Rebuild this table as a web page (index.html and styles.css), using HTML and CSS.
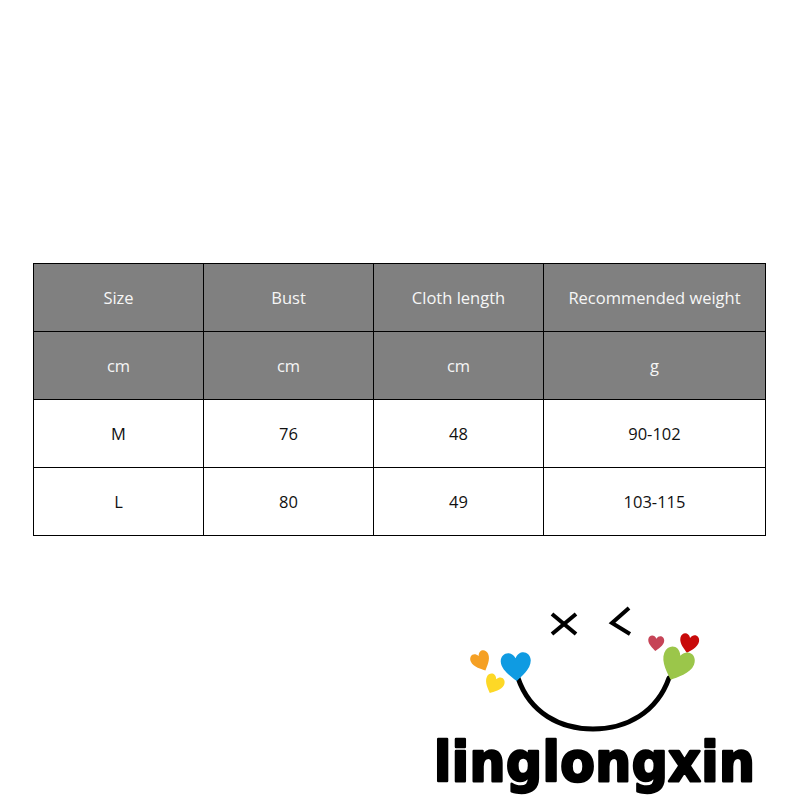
FILE: index.html
```html
<!DOCTYPE html>
<html>
<head>
<meta charset="utf-8">
<link rel="stylesheet" href="styles.css">
</head>
<body>
<div class="page">
  <div class="table">
    <div class="cell head">Size</div>
    <div class="cell head">Bust</div>
    <div class="cell head">Cloth length</div>
    <div class="cell head">Recommended weight</div>
    <div class="cell head">cm</div>
    <div class="cell head">cm</div>
    <div class="cell head">cm</div>
    <div class="cell head">g</div>
    <div class="cell">M</div>
    <div class="cell">76</div>
    <div class="cell">48</div>
    <div class="cell">90-102</div>
    <div class="cell">L</div>
    <div class="cell">80</div>
    <div class="cell">49</div>
    <div class="cell">103-115</div>
  </div>
  <svg class="logo" width="360" height="210" viewBox="420 590 360 210">
    <defs>
      <path id="heart" d="M0,0.5 C-0.15,0.36 -0.5,0.12 -0.5,-0.17 C-0.5,-0.46 -0.14,-0.56 0,-0.26 C0.14,-0.56 0.5,-0.46 0.5,-0.17 C0.5,0.12 0.15,0.36 0,0.5 Z"/>
    </defs>
    <g stroke="#000" stroke-width="4" fill="none" stroke-linecap="butt">
      <line x1="552" y1="614" x2="576" y2="634"/>
      <line x1="576" y1="614" x2="552" y2="634"/>
      <polyline points="629,608 612,623 630,634"/>
    </g>
    <path d="M518,678 C530,713 560,729 593,729 C627,729 657,712 669,678" stroke="#000" stroke-width="5" fill="none" stroke-linecap="round"/>
    <use href="#heart" fill="#f5a024" transform="translate(481,661) rotate(-25) scale(19,21)"/>
    <use href="#heart" fill="#fdd826" transform="translate(494,684) rotate(25) scale(19,20)"/>
    <use href="#heart" fill="#0f9be2" transform="translate(516,666) rotate(-3) scale(30,30)"/>
    <use href="#heart" fill="#c64457" transform="translate(656,643) rotate(5) scale(16,16)"/>
    <use href="#heart" fill="#c80a0a" transform="translate(689,643) rotate(12) scale(19,20)"/>
    <use href="#heart" fill="#9bc64a" transform="translate(677,664) rotate(22) scale(32,34)"/>
    <text class="brand" x="434" y="781">linglongxin</text>
  </svg>
</div>
</body>
</html>
```

FILE: styles.css
```css
html, body {
  margin: 0;
  padding: 0;
  background: #fff;
}
.page {
  width: 800px;
  height: 800px;
  padding: 263px 0 0 33px;
  box-sizing: border-box;
  overflow: hidden;
}
.table {
  display: grid;
  grid-template-columns: 169px 169px 169px 221px;
  grid-auto-rows: 67px;
  gap: 1px;
  padding: 1px;
  background: #000;
  width: max-content;
  font-family: "Open Sans", "Noto Sans", sans-serif;
  font-size: 16.5px;
}
.cell {
  background: #fff;
  color: #111;
  display: flex;
  align-items: center;
  justify-content: center;
  padding-bottom: 1px;
}
.cell.head {
  background: #808080;
  color: #f6f6f6;
}
.logo {
  display: block;
  margin: 54px 0 0 387px;
}
.brand {
  font-family: "DejaVu Sans Condensed", "DejaVu Sans", sans-serif;
  font-weight: bold;
  font-size: 56px;
  letter-spacing: 0.5px;
  fill: #000;
  stroke: #000;
  stroke-width: 2.5;
  stroke-linejoin: round;
}
```
